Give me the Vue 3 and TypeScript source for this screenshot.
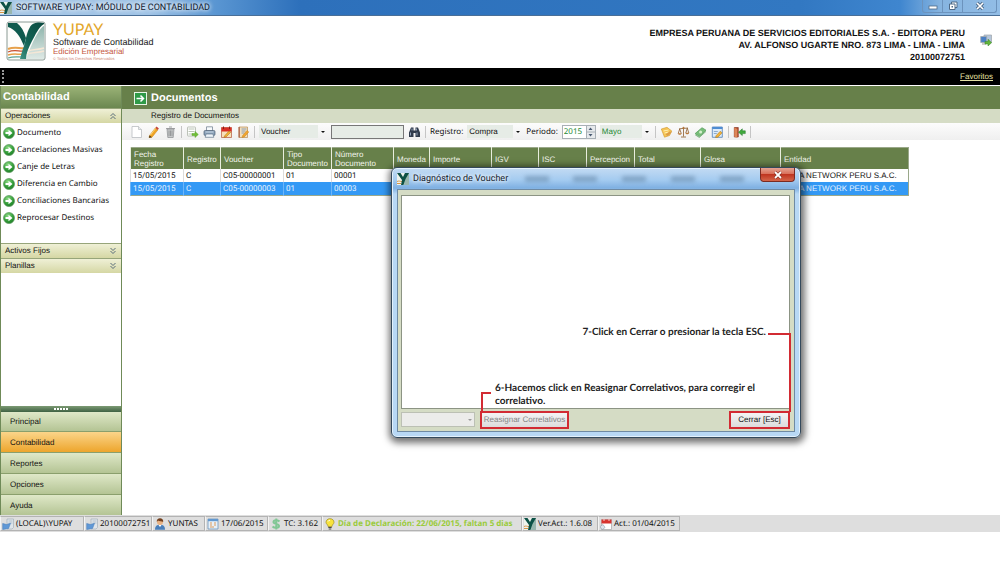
<script setup lang="ts">
import { ref } from 'vue'

interface Row {
  date: string
  reg: string
  voucher: string
  type: string
  num: string
  entity: string
}

const links: string[] = [
  'Documento',
  'Cancelaciones Masivas',
  'Canje de Letras',
  'Diferencia en Cambio',
  'Conciliaciones Bancarias',
  'Reprocesar Destinos',
]
const modules: string[] = ['Principal', 'Contabilidad', 'Reportes', 'Opciones', 'Ayuda']
const columns: string[] = [
  'Fecha Registro', 'Registro', 'Voucher', 'Tipo Documento', 'Número Documento', 'Moneda', 'Importe',
  'IGV', 'ISC', 'Percepcion', 'Total', 'Glosa', 'Entidad',
]
const rows: Row[] = [
  { date: '15/05/2015', reg: 'C', voucher: 'C05-00000001', type: '01', num: '00001', entity: 'A NETWORK PERU S.A.C.' },
  { date: '15/05/2015', reg: 'C', voucher: 'C05-00000003', type: '01', num: '00003', entity: 'A NETWORK PERU S.A.C.' },
]
const status = [
  { icon: 'server', text: '(LOCAL)\\YUPAY', cls: 'w-server' },
  { icon: 'server', text: '20100072751', cls: 'w-ruc' },
  { icon: 'user', text: 'YUNTAS', cls: 'w-user' },
  { icon: 'date', text: '17/06/2015', cls: 'w-date' },
  { icon: 'money', text: 'TC: 3.162', cls: 'w-rate' },
  { icon: 'bulb', text: 'Día de Declaración: 22/06/2015, faltan 5 dias', cls: 'w-due' },
  { icon: 'mini', text: 'Ver.Act.: 1.6.08', cls: 'w-ver' },
  { icon: 'calendar', text: 'Act.: 01/04/2015', cls: 'w-upd' },
]
const active = ref('Contabilidad')
const selected = ref(1)
const query = ref('')
const year = ref('2015')
</script>

<template>
  <div class="app">
    <svg class="defs" aria-hidden="true">
      <defs>
        <linearGradient id="teal" x1="1" y1="0" x2="0" y2="1"><stop offset="0" stop-color="#0b4a40" /><stop offset=".6" stop-color="#136354" /><stop offset="1" stop-color="#3f9484" /></linearGradient>
        <linearGradient id="mist" x1="0" y1="0" x2="0" y2="1"><stop offset="0" stop-color="#8fb5ad" /><stop offset="1" stop-color="#dfe9e5" /></linearGradient>
        <radialGradient id="ball" cx=".4" cy=".3" r=".8"><stop offset="0" stop-color="#8fdc86" /><stop offset=".6" stop-color="#2f9a35" /><stop offset="1" stop-color="#1c7426" /></radialGradient>
      </defs>
      <symbol id="i-logo" viewBox="0 0 40 40">
        <rect x="1" y="1" width="38" height="38" rx="2" fill="#fdfdfb" stroke="#8a9a94" />
        <path d="M33 10c2-3 4-5 5-5v33H20c4-10 7-19 13-28z" fill="url(#mist)" />
        <path d="M22 30c5-2 10-1 16-3M21 33c6-2 11-1 17-3" fill="none" stroke="#f5e7d6" stroke-width="1.500" />
        <path d="M2 28c7-3 12 0 18-1" fill="none" stroke="#e6a04a" stroke-width="2" />
        <path d="M2 31c7-3 11 0 17-1" fill="none" stroke="#c9502f" stroke-width="1.200" />
        <path d="M2 34c7-2 10 0 16-1" fill="none" stroke="#e6a04a" stroke-width="1.500" />
        <path d="M2 37c6-2 9-1 14-1" fill="none" stroke="#5aa394" stroke-width="1.200" />
        <path d="M2 2h9c4 3 7 8 9 15l-2 8C14 15 9 8 2 6z" fill="#0f5a4e" />
        <path d="M38 2c-5-1-11-1-14 4-4 7-4 13-6 19-2 5-3 9-4 13h6c0-6 3-12 6-18 4-7 6-13 12-17z" fill="url(#teal)" />
      </symbol>
      <symbol id="i-mini" viewBox="0 0 12 12">
        <rect width="12" height="12" fill="#eef3ee" /><path d="M8 0h4v12H7z" fill="#17594d" opacity=".4" />
        <path d="M0 8.500c2-1 3 0 5 0M0 10.500h4" fill="none" stroke="#d99545" />
        <path d="M0 0h3.500l2.500 4 2-4h4L8.500 6 6.500 12H4l1-5z" fill="#0d5146" />
      </symbol>
      <symbol id="i-go" viewBox="0 0 12 12">
        <circle cx="6" cy="6" r="5.500" fill="url(#ball)" stroke="#5d9b5d" stroke-width=".7" /><path d="M2.500 4.900h3V2.800L9.500 6 5.500 9.200V7.100h-3z" fill="#fff" />
      </symbol>
      <symbol id="i-page" viewBox="0 0 12 12"><path d="M1.500.5h6.500l3 3v8h-9.500z" fill="#fff" stroke="#b9bdc0" stroke-width=".8" /><path d="M8 .5v3h3" fill="#e8eaec" stroke="#b9bdc0" stroke-width=".7" /></symbol>
      <symbol id="i-pencil" viewBox="0 0 12 12"><path d="M2 9.500 7.800 2l2.500 2-5.800 7.200-3 .5z" fill="#f0a526" stroke="#c98515" stroke-width=".5" /><path d="m7.800 2 1.200-1.500 2.400 2-1.100 1.500z" fill="#c54638" /><path d="m2 9.500-.5 2.200 3-.5z" fill="#3b2d1e" /><path d="m3 9 5-6.500" stroke="#ffe08a" stroke-width=".8" /></symbol>
      <symbol id="i-trash" viewBox="0 0 12 12"><path d="M2.500 3h7l-.8 8.500H3.300z" fill="#c6c8c9" stroke="#8b8e90" stroke-width=".7" /><path d="M1.500 2.500h9M4.500 1h3M4.500 4.500v5.500M6 4.500v5.500M7.500 4.500v5.500" stroke="#8b8d8f" stroke-width=".8" fill="none" /></symbol>
      <symbol id="i-export" viewBox="0 0 12 12"><rect x="1" y="1" width="8" height="9" rx=".5" fill="#fff" stroke="#adb5a8" stroke-width=".8" /><path d="M2 3h6M2 5.500h6M2 8h4" stroke="#a9b8a2" stroke-width=".8" /><path d="M5.500 7.500h3V5.500l3.300 3-3.300 3v-2h-3z" fill="#71bf36" stroke="#5aa32e" stroke-width=".5" /></symbol>
      <symbol id="i-print" viewBox="0 0 12 12"><path d="M3 .8h6V5H3z" fill="#f7fafc" stroke="#68788a" stroke-width=".7" /><rect x=".5" y="4.500" width="11" height="5" rx="1.200" fill="#8ba2ba" stroke="#4c5f73" stroke-width=".7" /><path d="M2.500 8h7l.8 3.300H1.700z" fill="#eef5fb" stroke="#64788c" stroke-width=".7" /><path d="M2 6h8" stroke="#d9e6f1" stroke-width=".8" /></symbol>
      <symbol id="i-cal" viewBox="0 0 12 12"><path d="M1 1.500h10v10H1z" fill="#f6e1ba" stroke="#b3563b" stroke-width=".7" /><path d="M1 1.500h10v4H1z" fill="#d92f25" /><path d="M3 .5v2.500M9 .5v2.500" stroke="#8a1d18" /><path d="m4 10 4.500-5 1.700 1.300L5.500 11l-2 .3z" fill="#f3b233" stroke="#a06a12" stroke-width=".5" /></symbol>
      <symbol id="i-note" viewBox="0 0 12 12"><path d="M1.500 1h8.500v10.500H1.500z" fill="#f3dfbc" stroke="#b78e55" stroke-width=".7" /><path d="M1 1h1.500v10.500H1z" fill="#b4745a" /><path d="M4 3h5M4 5h4M4 7h3" stroke="#6f8db2" stroke-width=".8" /><path d="m5 9.700 4.500-5.200 1.800 1.400-4.500 5-2.300.6z" fill="#f2a52c" stroke="#c28224" stroke-width=".5" /></symbol>
      <symbol id="i-find" viewBox="0 0 12 12"><path d="M2.500 1.500H5v3h2v-3h2.500l2 5v4.500H7v-4H5v4H.5V6.500z" fill="#303b4c" /><path d="M2 6.500v3M8.500 6.500v3M3.500 2.500v2M8 2.500v2" stroke="#9dafc6" stroke-width=".9" /></symbol>
      <symbol id="i-note2" viewBox="0 0 12 12"><path d="m.8 3 5.700-1.700L11.300 5 9 9.500l-5 1.700z" fill="#f6c554" stroke="#cf9730" stroke-width=".6" /><path d="m3 5 5-1M4 7l4-1" stroke="#fff0b5" /><path d="m5 8.500 4.500-3.300 1.500 1.400-4 3.500z" fill="#dd9c48" /></symbol>
      <symbol id="i-scale" viewBox="0 0 12 12"><path d="M6 1v9.500M1.500 2.800 10.500 2M3.500 11h5M2.200 3 .7 7.500M2.200 3l1.600 4.500M9.800 2.200 8.300 7M9.800 2.200l1.500 4.800" fill="none" stroke="#8c5a2c" stroke-width=".8" /><path d="M.3 7.300h3.900c-.6 2-3.300 2-3.900 0zM7.800 6.800h3.900c-.6 2-3.300 2-3.900 0z" fill="#b9783a" /><circle cx="6" cy="1.800" r="1" fill="#b9783a" /></symbol>
      <symbol id="i-cash" viewBox="0 0 12 12"><path d="m.7 7.500 6.800-5.800 4 2.500-6.700 6.300z" fill="#77bd78" stroke="#4f9a55" stroke-width=".7" /><path d="m.7 8.800 4.100 2.600 6.700-6" fill="none" stroke="#5aa05f" stroke-width=".8" /><circle cx="6.100" cy="6" r="1.500" fill="#d6f0cf" /></symbol>
      <symbol id="i-form" viewBox="0 0 12 12"><path d="M.8 1h10v10.300H.8z" fill="#dcebfa" stroke="#4f7fb8" stroke-width=".8" /><path d="M.8 1h10v2H.8z" fill="#4e8cd2" /><path d="M2.300 5.500h4M2.300 7.500h3" stroke="#85a5c8" stroke-width=".9" /><path d="m4.500 9.800 4.200-4.500 1.900 1.500-4.200 4.400-2.300.3z" fill="#f4b238" stroke="#a57519" stroke-width=".5" /></symbol>
      <symbol id="i-exit" viewBox="0 0 12 12"><path d="M.8 1.500h4v9.500h-4z" fill="#b44b2e" stroke="#7c2d1a" stroke-width=".6" /><path d="m.8 1.500 3 1.500v8.800l-3-1z" fill="#dc8658" /><path d="M11.800 4.800h-3V2.800L5 6.200l3.800 3.400v-2h3z" fill="#3faa3d" stroke="#217426" stroke-width=".5" /></symbol>
      <symbol id="i-server" viewBox="0 0 12 12"><path d="M5 1h6.500v8.500L10 11H5z" fill="#dfe5ea" stroke="#a5b0ba" stroke-width=".7" /><path d="M6.500 3h4M6.500 5h4" stroke="#a7b7c5" stroke-width=".8" /><path d="M.7 5.500 4.500 6.500 8.500 5.300 6.500 10.500.7 11.500z" fill="#5f98d6" stroke="#4d82bd" stroke-width=".6" /></symbol>
      <symbol id="i-user" viewBox="0 0 12 12"><path d="M1 11.700c0-4 2-5 5-5s5 1 5 5z" fill="#497fbb" /><path d="m4.500 7 1.500 2 1.500-2z" fill="#fff" /><circle cx="6" cy="4" r="3" fill="#e9b283" /><path d="M2.800 4C2.500 1.500 4 .3 6 .3S9.500 1.500 9.200 4C8 3 5 3.500 4 2.500z" fill="#73401e" /></symbol>
      <symbol id="i-date" viewBox="0 0 12 12"><path d="M1 1h10v10H1z" fill="#e7f0f8" stroke="#6c94bb" stroke-width=".8" /><path d="M1 1h10v2.200H1z" fill="#6399d0" /><path d="M3 5h2M7 5h2M3 7h2M7 7h2M3 9h4" stroke="#dc9b5c" /></symbol>
      <symbol id="i-money" viewBox="0 0 12 12"><path d="M9.500 3.500C8 1.700 3.500 1.700 3.500 4S9 5.700 9 8s-4.500 2.300-6.500.5M6.300.5v11" fill="none" stroke="#82c795" stroke-width="2" /></symbol>
      <symbol id="i-bulb" viewBox="0 0 12 12"><path d="M6 .7c-2.500 0-4 1.700-4 3.600C2 6 4 6.500 4 8.500h4C8 6.500 10 6 10 4.300 10 2.400 8.500.7 6 .7z" fill="#f8e33c" stroke="#9c8c20" stroke-width=".7" /><path d="M4.300 9.500h3.400M4.700 11h2.600" stroke="#4c4c43" /><path d="M4 3.500c.3-.8 1-1.300 2-1.300" stroke="#fff" fill="none" /></symbol>
      <symbol id="i-calendar" viewBox="0 0 12 12"><path d="M1.500 1.500h10v10h-10z" fill="#fff" stroke="#a6a6a6" stroke-width=".7" /><path d="M1.500 1.500h10v4h-10z" fill="#d73430" /><path d="M4 .3V3M9 .3V3" stroke="#f8cfcc" /><path d="M0 8.500 3 6.500l2 3-3 2.300z" fill="#dfe6ee" stroke="#8b99a6" stroke-width=".6" /></symbol>
      <symbol id="i-net" viewBox="0 0 12 12"><path d="M4 1h7.500v7.500H4z" fill="#b5c6da" stroke="#9da4a9" stroke-width=".7" /><path d="M.7 2.500h6v6h-6z" fill="#4b80c4" stroke="#a4a9ad" stroke-width=".8" /><path d="M2 10h4" stroke="#999" /><path d="M5 7.500h3V5.200l3.600 3.500L8 12V10H5z" fill="#63b53a" stroke="#36852a" stroke-width=".5" /></symbol>
      <symbol id="i-chev" viewBox="0 0 8 8"><path d="m1.500 4 2.500-2.500L6.500 4M1.500 7 4 4.500 6.500 7" fill="none" stroke="#4b6072" stroke-width=".9" /></symbol>
    </svg>

    <header class="titlebar">
      <svg class="ic12"><use href="#i-mini" /></svg>
      <h1>SOFTWARE YUPAY: MÓDULO DE CONTABILIDAD</h1>
      <div class="winbtns">
        <button type="button" aria-label="Minimizar"><svg viewBox="0 0 12 10"><rect x="2" y="5" width="8" height="3" fill="#fff" stroke="#4f6a87" stroke-width=".8" /></svg></button>
        <button type="button" aria-label="Restaurar"><svg viewBox="0 0 12 10"><path d="M4.500 1H10v5.500H4.500z" fill="#fff" stroke="#4f6a87" /><path d="M2.500 3H8v5.500H2.500z" fill="#fff" stroke="#4f6a87" /><path d="M4.500 5H6v1.500H4.500z" fill="#4f6a87" /></svg></button>
        <button type="button" class="wide" aria-label="Cerrar ventana"><svg viewBox="0 0 12 10"><path d="m3 2 6 6m0-6L3 8" stroke="#4f6a87" stroke-width="3.200" /><path d="m3 2 6 6m0-6L3 8" stroke="#fff" stroke-width="1.600" /></svg></button>
      </div>
    </header>

    <section class="brandbar">
      <svg class="biglogo"><use href="#i-logo" /></svg>
      <div class="brand">
        <div class="yupay">YUPAY</div>
        <div class="soft">Software de Contabilidad</div>
        <div class="edition">Edición Empresarial</div>
        <div class="rights">© Todos los Derechos Reservados</div>
      </div>
      <div class="company">EMPRESA PERUANA DE SERVICIOS EDITORIALES S.A. - EDITORA PERU<br>AV. ALFONSO UGARTE NRO. 873 LIMA - LIMA - LIMA<br>20100072751</div>
      <svg class="ic12"><use href="#i-net" /></svg>
    </section>

    <nav class="favbar"><span class="grip"></span><a href="#favoritos">Favoritos</a></nav>

    <div class="work">
      <aside class="side">
        <h2>Contabilidad</h2>
        <button type="button" class="group">Operaciones<svg><use href="#i-chev" /></svg></button>
        <ul class="links">
          <li v-for="l in links" :key="l"><svg class="ic12"><use href="#i-go" /></svg><a href="#">{{ l }}</a></li>
        </ul>
        <button type="button" class="group">Activos Fijos<svg class="down"><use href="#i-chev" /></svg></button>
        <button type="button" class="group">Planillas<svg class="down"><use href="#i-chev" /></svg></button>
        <div class="spacer"></div>
        <div class="splitter"><i v-for="n in 5" :key="n"></i></div>
        <button v-for="m in modules" :key="m" type="button" class="module" :class="{ on: m === active }" @click="active = m">{{ m }}</button>
      </aside>

      <main class="main">
        <h2 class="pagehead">
          <svg viewBox="0 0 13 13"><rect x=".5" y=".5" width="12" height="12" fill="#2f9a47" stroke="#e9f5e6" /><path d="M2.500 6.500h7M6.500 3.500l3 3-3 3" fill="none" stroke="#fff" stroke-width="1.500" /></svg>
          Documentos
        </h2>
        <div class="subhead">Registro de Documentos</div>
        <div class="toolbar">
          <button type="button" aria-label="Nuevo"><svg><use href="#i-page" /></svg></button>
          <button type="button" aria-label="Editar"><svg><use href="#i-pencil" /></svg></button>
          <button type="button" aria-label="Eliminar"><svg><use href="#i-trash" /></svg></button>
          <span class="sep"></span>
          <button type="button" aria-label="Exportar"><svg><use href="#i-export" /></svg></button>
          <button type="button" aria-label="Imprimir"><svg><use href="#i-print" /></svg></button>
          <button type="button" aria-label="Calendario"><svg><use href="#i-cal" /></svg></button>
          <button type="button" aria-label="Notas"><svg><use href="#i-note" /></svg></button>
          <span class="sep"></span>
          <span class="combo c-field"><select aria-label="Campo"><option>Voucher</option></select></span>
          <input v-model="query" class="search" type="text" aria-label="Buscar texto">
          <button type="button" aria-label="Buscar"><svg><use href="#i-find" /></svg></button>
          <span class="sep"></span>
          <label for="reg">Registro:</label>
          <span class="combo c-reg"><select id="reg"><option>Compra</option></select></span>
          <label for="year">Periodo:</label>
          <span class="spin"><input id="year" v-model="year" type="text"><svg viewBox="0 0 9 12"><path d="M0 0h9v12H0z" fill="#e6e9ec" /><path d="M0 6h9M.5 0v12" stroke="#a9b0b6" /><path d="m2.500 4 2-2.500 2 2.500zM2.500 8l2 2.500 2-2.500z" fill="#4a5a72" /></svg></span>
          <span class="combo c-month"><select aria-label="Mes"><option>Mayo</option></select></span>
          <span class="sep"></span>
          <button type="button" aria-label="Diagnóstico"><svg><use href="#i-note2" /></svg></button>
          <button type="button" aria-label="Balance"><svg><use href="#i-scale" /></svg></button>
          <button type="button" aria-label="Pagos"><svg><use href="#i-cash" /></svg></button>
          <button type="button" aria-label="Formulario"><svg><use href="#i-form" /></svg></button>
          <span class="sep"></span>
          <button type="button" aria-label="Salir"><svg><use href="#i-exit" /></svg></button>
          <span class="sep"></span>
        </div>

        <table class="grid">
          <colgroup><col v-for="(c, i) in columns" :key="c" :class="'k' + i"></colgroup>
          <thead><tr><th v-for="c in columns" :key="c" scope="col">{{ c }}</th></tr></thead>
          <tbody>
            <tr v-for="(r, i) in rows" :key="r.voucher" :class="{ sel: i === selected }" @click="selected = i">
              <td>{{ r.date }}</td><td>{{ r.reg }}</td><td>{{ r.voucher }}</td><td>{{ r.type }}</td><td>{{ r.num }}</td>
              <td v-for="n in 7" :key="n"></td>
              <td class="entity">{{ r.entity }}</td>
            </tr>
          </tbody>
        </table>
      </main>
    </div>

    <footer class="status">
      <div v-for="s in status" :key="s.text" class="cell" :class="s.cls"><svg class="ic12"><use :href="'#i-' + s.icon" /></svg><span>{{ s.text }}</span></div>
    </footer>

    <section class="dialog" role="dialog" aria-labelledby="dlg">
      <div class="dtitle">
        <svg class="ic12"><use href="#i-mini" /></svg>
        <h3 id="dlg">Diagnóstico de Voucher</h3>
        <div class="haze"><i></i><i></i><i></i><i></i><i></i></div>
        <button type="button" class="dclose" aria-label="Cerrar diálogo"><svg viewBox="0 0 10 8"><path d="m2 1 6 6m0-6L2 7" stroke="#7c2a1f" stroke-width="3" /><path d="m2 1 6 6m0-6L2 7" stroke="#fff" stroke-width="1.800" /></svg></button>
      </div>
      <div class="dbody">
        <div class="result"></div>
        <div class="actions">
          <span class="combo dis"><select disabled aria-label="Tipo"><option></option></select></span>
          <button type="button" class="marked reassign" disabled>Reasignar Correlativos</button>
          <button type="button" class="marked close">Cerrar [Esc]</button>
        </div>
      </div>
      <p class="tip tip7">7-Click en Cerrar o presionar la tecla ESC.</p>
      <span class="lead lead7"></span>
      <p class="tip tip6">6-Hacemos click en Reasignar Correlativos, para corregir el correlativo.</p>
      <span class="lead lead6"></span>
    </section>
  </div>
</template>

<style>
body { margin: 0; background: #fff; }
</style>

<style scoped>
* { box-sizing: border-box; }
.app { --title: Roboto, "Open Sans", sans-serif; --ui: "Noto Sans", "Open Sans", sans-serif; --sans: "Liberation Sans", Arial, sans-serif; position: relative; display: flex; flex-direction: column; min-height: 100vh; padding-bottom: 30px; overflow: hidden; font: 8px/10px var(--sans); color: #111; background: #fff; text-rendering: geometricPrecision; }
.defs { position: absolute; width: 0; height: 0; }
h1, h2, h3, p, ul { margin: 0; padding: 0; }
button, input, select { font: inherit; color: inherit; margin: 0; padding: 0; border: 0; background: none; border-radius: 0; text-rendering: inherit; }
svg { display: block; flex: none; }
.ic12 { width: 12px; height: 12px; }

.titlebar { display: flex; align-items: center; gap: 4px; height: 16px; background: linear-gradient(90deg, #a8c8e6 0, #9fc3e6 150px, #5a96d2 215px, #2d70bb 300px, #3278c2 80%, #3f86cf 90%, #86b4e0 94%, #92bde6); border-bottom: 1px solid #4a6f97; }
.titlebar h1 { flex: 1; font: 9px/14px var(--title); color: #10202f; text-shadow: 0 0 4px #fff, 0 0 5px #fff; }
.winbtns { display: flex; align-self: flex-start; height: 13px; margin-right: 3px; border: 1px solid #6c93bd; border-top: 0; border-radius: 0 0 3px 3px; }
.winbtns button { display: grid; place-items: center; width: 20px; border-right: 1px solid #6c93bd; }
.winbtns .wide { width: 33px; border: 0; }
.winbtns svg { width: 12px; height: 10px; }

.brandbar { display: flex; align-items: flex-start; height: 52px; padding: 5px 8px 0 6px; }
.biglogo { width: 40px; height: 40px; }
.brand { flex: 1; padding: 1px 0 0 7px; }
.yupay { font: 16px/16px Lato, sans-serif; color: #e3a72b; }
.soft { font-size: 9px; line-height: 9px; color: #222; }
.edition { font-size: 8px; line-height: 9px; color: #c4553b; }
.rights { font-size: 4px; line-height: 5px; color: #cf8a76; }
.company { padding: 6px 15px 0 0; font: bold 9px/12px var(--sans); text-align: right; color: #111; }
.brandbar > .ic12 { margin-top: 13px; }

.favbar { display: flex; align-items: center; justify-content: space-between; height: 17px; padding: 0 7px 0 2px; background: #000; }
.favbar a { color: #e6e3a5; }
.grip { height: 13px; border-left: 2px dotted #999; }

.work { display: flex; flex: 1; margin-top: 1px; }
.side { display: flex; flex-direction: column; width: 122px; border: solid #6f8a58; border-width: 0 1px; }
.side h2 { height: 22px; padding-left: 2px; font: bold 11px/22px var(--sans); color: #fff; background: linear-gradient(#9bb377, #6b8750); }
.group { display: flex; align-items: center; justify-content: space-between; height: 15px; padding: 0 4px; border: solid #97a57a; border-width: 1px 0 0; background: linear-gradient(#eff0d6, #d5d7a4); }
.group svg { width: 8px; height: 8px; }
.down { transform: rotate(180deg); }
.links { height: 120px; padding-top: 1px; list-style: none; }
.links li { display: flex; align-items: center; gap: 2px; height: 17px; padding-left: 2px; }
.links a { font: 8px/12px var(--ui); color: #111; text-decoration: none; white-space: nowrap; }
.spacer { flex: 1; }
.splitter { display: flex; justify-content: center; align-items: center; gap: 1px; height: 6px; background: linear-gradient(#7d9b74, #3f6143); }
.splitter i { width: 2px; height: 2px; background: #fff; }
.module { height: 20px; flex: none; padding: 1px 0 0 9px; text-align: left; border-bottom: 1px solid #8a9f6c; background: linear-gradient(#dfe8c8, #b4c494); }
.module + .module { height: 21px; }
.module:last-child { height: 20px; border: 0; }
.module.on { background: linear-gradient(#fbd58a, #eda52c); }

.main { flex: 1; min-width: 0; }
.pagehead { display: flex; align-items: center; gap: 4px; height: 23px; padding: 2px 0 0 12px; font: bold 11px/13px var(--sans); color: #fff; background: #67804a; }
.pagehead svg { width: 13px; height: 13px; }
.subhead { height: 14px; padding-left: 29px; line-height: 14px; background: #d5dcc5; }
.toolbar { display: flex; align-items: center; gap: 4px; height: 17px; padding-left: 8px; background: linear-gradient(#fcfcfc, #efefef); }
.toolbar > * { flex: none; }
.toolbar button, .toolbar button svg { width: 13px; height: 12px; }
.sep { width: 1px; height: 12px; background: #c5c5c5; }
.toolbar label { font: 8px/12px var(--ui); }
.combo { position: relative; display: block; height: 13px; }
.combo select { width: 100%; height: 100%; padding-left: 2px; appearance: none; background: linear-gradient(#e6ece6, #e6ece6) no-repeat 0 0 / calc(100% - 9px) 100%; opacity: 1; }
.combo::after { content: ""; position: absolute; right: 2px; top: 6px; border: solid transparent; border-width: 2px 2px 0; border-top-color: #111; }
.c-field { width: 68px; }
.c-reg { width: 55px; }
.c-month { width: 51px; color: #258a35; }
.search { width: 73px; height: 14px; padding: 0 2px; border: 1px solid #777; background: #e6ece6; }
.spin { display: flex; height: 14px; border: 1px solid #a9b0b6; background: #fff; color: #258a35; }
.spin input { width: 23px; padding-left: 1px; font: 8px/12px var(--ui); }
.spin svg { width: 9px; height: 12px; }

.grid { width: 779px; margin: 7px 0 0 8px; border-collapse: collapse; table-layout: fixed; border: 1px solid #9aa88a; }
.grid th { height: 21px; padding: 2px 0 0 3px; text-align: left; font-weight: normal; line-height: 9px; color: #f2f5ea; background: #67804a; border-left: 1px solid #e9eede; }
.grid td { height: 13px; padding: 1px 0 0 2px; font: 8px/12px var(--title); white-space: nowrap; border-left: 1px solid #dcdcdc; }
.grid .entity { padding-left: 18px; font-family: var(--sans); }
.sel td { color: #e9f4ff; background: #3399f5; border-color: #6db5f8; }
.k0 { width: 53px; } .k1 { width: 37px; } .k2 { width: 63px; } .k3 { width: 48px; } .k4 { width: 62px; } .k5 { width: 36px; } .k6 { width: 62px; }
.k7 { width: 47px; } .k8 { width: 48px; } .k9 { width: 48px; } .k10 { width: 66px; } .k11 { width: 80px; } .k12 { width: 128px; }

.status { display: flex; height: 17px; padding: 1px 0; background: #dedede; }
.cell { display: flex; align-items: center; gap: 2px; padding-left: 1px; border: 1px solid #b3b3b3; border-left-color: #f4f4f4; font: 8px/12px var(--ui); white-space: nowrap; }
.w-server { width: 84px; } .w-ruc { width: 68px; } .w-user { width: 53px; } .w-date { width: 63px; } .w-rate { width: 54px; }
.w-due { width: 200px; color: #9acb3c; font-weight: bold; } .w-ver { width: 76px; } .w-upd { width: 82px; }

.dialog { position: absolute; left: 391px; top: 167px; width: 410px; height: 271px; padding: 0 5px 5px; border: 1px solid #34495c; border-radius: 6px; background: linear-gradient(#c3dbf3 0, #a4cbf0 12px, #7fb0e2 20px, #b8d8f5 26px, #b8d8f5); box-shadow: inset 0 0 0 1px #e3f1fc, 1px 2px 7px 3px rgba(0, 0, 0, .55); display: flex; flex-direction: column; }
.dtitle { display: flex; align-items: center; gap: 4px; height: 21px; }
.dtitle h3 { font: 9px/14px var(--title); color: #14202c; text-shadow: 0 0 4px #fff, 0 0 4px #fff; }
.haze { flex: 1; display: flex; justify-content: space-around; filter: blur(2px); opacity: .5; }
.haze i { width: 24px; height: 6px; background: #5d7f9f; }
.dclose { display: grid; place-items: center; align-self: flex-start; width: 35px; height: 14px; border: 1px solid #7b2b22; border-top: 0; border-radius: 0 0 4px 4px; background: linear-gradient(#e5a393 0, #d9705a 45%, #bf3520 50%, #d4654a); }
.dclose svg { width: 10px; height: 8px; }
.dbody { flex: 1; display: flex; flex-direction: column; padding: 5px 4px 1px 3px; border: 1px solid #6f8aa3; background: #d5dcc5; }
.result { flex: 1; border: 1px solid #8c9484; background: #fff; }
.actions { display: flex; align-items: center; height: 21px; }
.combo.dis { width: 74px; height: 15px; border: 1px solid #bcc0b4; background: #ececea; }
.combo.dis select { background: none; }
.combo.dis::after { border-top-color: #999; }
.marked { height: 18px; border: 2px solid #d22b33; background: linear-gradient(#f4f4f4, #dcdcdc); white-space: nowrap; }
.reassign { width: 89px; margin-left: 5px; color: #858585; }
.close { width: 61px; margin-left: auto; }
.tip { position: absolute; font: bold 10px/13px Lato, sans-serif; color: #222; }
.tip7 { right: 34px; top: 158px; white-space: nowrap; }
.tip6 { left: 103px; top: 214px; width: 280px; }
.lead { position: absolute; border: 0 solid #d22b33; }
.lead7 { left: 376px; top: 165px; width: 23px; height: 79px; border-width: 2px 2px 0 0; }
.lead6 { left: 89px; top: 224px; width: 10px; height: 20px; border-width: 2px 0 0 2px; }
</style>
